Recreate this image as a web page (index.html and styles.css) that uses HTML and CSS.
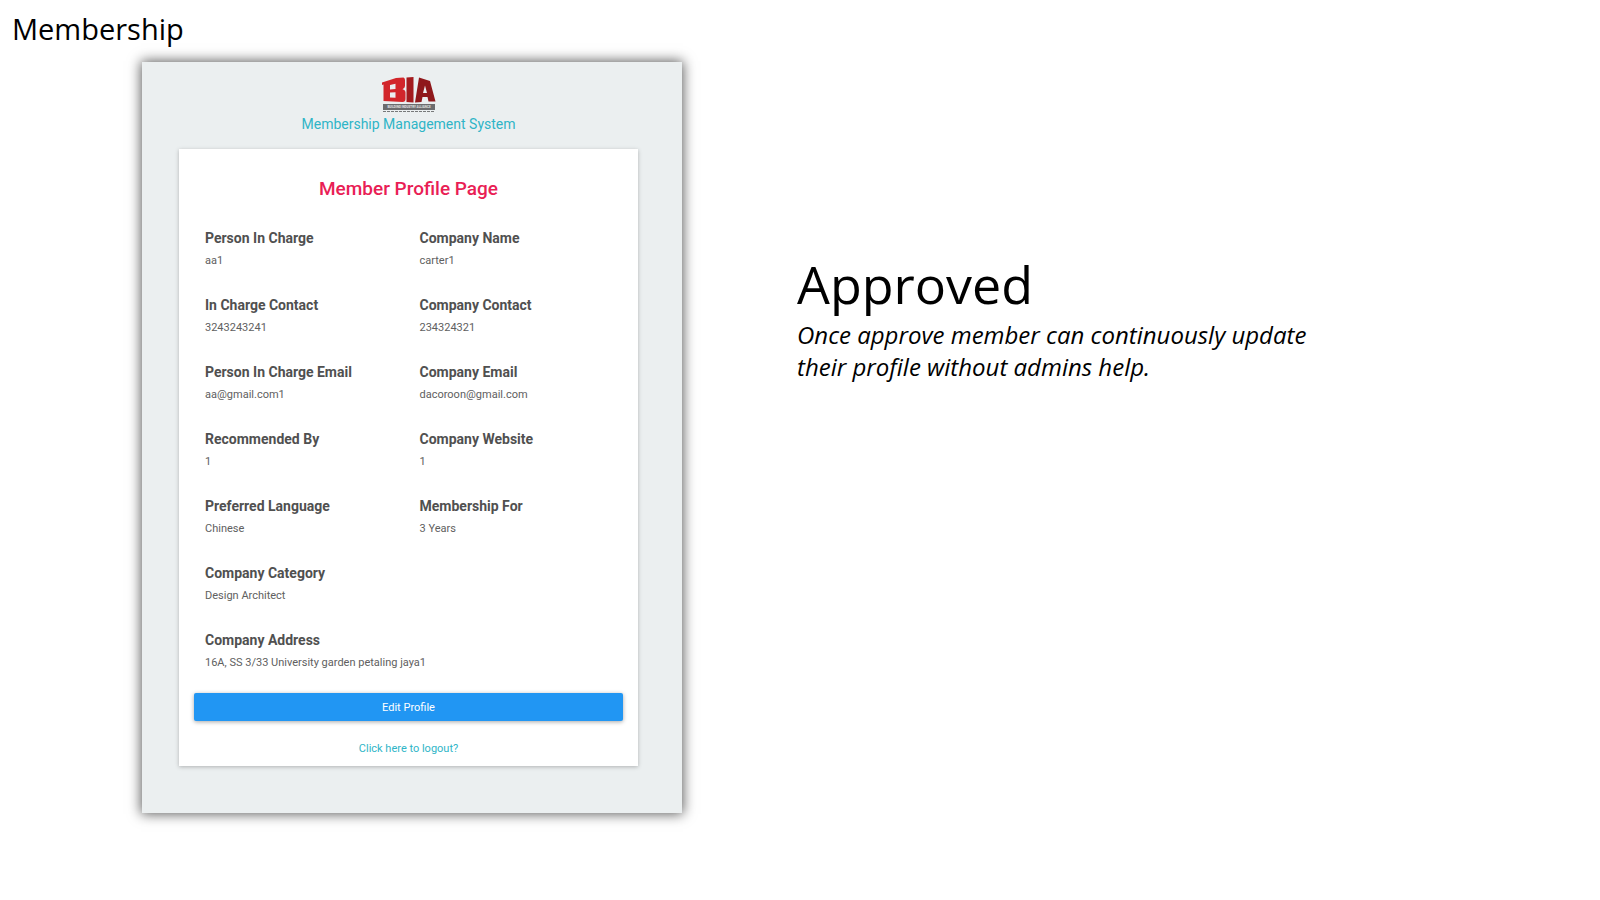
FILE: index.html
```html
<!DOCTYPE html>
<html lang="en">

<head>
    <meta charset="UTF-8">
    <meta name="viewport" content="width=device-width, initial-scale=1.0">
    <title>Membership</title>
    <link rel="stylesheet" href="styles.css">
</head>

<body>
    <h1 class="page-title">Membership</h1>
    <main class="slide">
        <section class="panel">
            <svg class="logo" viewBox="0 0 54 36" role="img" aria-label="BIA">
                <!-- B -->
                <path fill="#d2262b" fill-rule="evenodd" d="M0 6.5L14 2l7.500-.5Q23 2 23 4v6q0 2-2.500 3.200Q23.500 14 23.500 16.500V23q0 3-3 3L1.500 25V8.500L0 9zM8 9v4.500l5.500-.6V7.800zM8 16.500v5l5.500.3v-5.600z" />
                <!-- I -->
                <path fill="#a31b1e" d="M24.500 1.500L31.500 1v25.500l-7-.4z" />
                <!-- A -->
                <path fill="#8f181b" fill-rule="evenodd" d="M37 1.500L48 5l5.500 20.500h-7L45.500 21h-5l-1 5-6.500.5zM43 9.500L41 17h4z" />
                <!-- name strip -->
                <rect fill="#6c6c6e" x="1" y="28" width="52" height="6" />
                <text class="logo-name" x="27" y="32">BUILDING INDUSTRY ALLIANCE</text>
                <path stroke="#77797a" stroke-dasharray="3 1" d="M1 35.500h52" />
            </svg>
            <p class="system">Membership Management System</p>

            <div class="card">
                <h2>Member Profile Page</h2>
                <dl class="fields">
                    <div>
                        <dt>Person In Charge</dt>
                        <dd>aa1</dd>
                    </div>
                    <div>
                        <dt>Company Name</dt>
                        <dd>carter1</dd>
                    </div>
                    <div>
                        <dt>In Charge Contact</dt>
                        <dd>3243243241</dd>
                    </div>
                    <div>
                        <dt>Company Contact</dt>
                        <dd>234324321</dd>
                    </div>
                    <div>
                        <dt>Person In Charge Email</dt>
                        <dd>aa@gmail.com1</dd>
                    </div>
                    <div>
                        <dt>Company Email</dt>
                        <dd>dacoroon@gmail.com</dd>
                    </div>
                    <div>
                        <dt>Recommended By</dt>
                        <dd>1</dd>
                    </div>
                    <div>
                        <dt>Company Website</dt>
                        <dd>1</dd>
                    </div>
                    <div>
                        <dt>Preferred Language</dt>
                        <dd>Chinese</dd>
                    </div>
                    <div>
                        <dt>Membership For</dt>
                        <dd>3 Years</dd>
                    </div>
                    <div class="wide">
                        <dt>Company Category</dt>
                        <dd>Design Architect</dd>
                    </div>
                    <div class="wide">
                        <dt>Company Address</dt>
                        <dd>16A, SS 3/33 University garden petaling jaya1</dd>
                    </div>
                </dl>
                <button class="edit" type="button">Edit Profile</button>
                <a class="logout" href="#">Click here to logout?</a>
            </div>
        </section>

        <section class="note">
            <h2>Approved</h2>
            <p>Once approve member can continuously update their profile without admins help.</p>
        </section>
    </main>
</body>

</html>
```

FILE: styles.css
```css
* {
    margin: 0;
    padding: 0;
    box-sizing: border-box;
}

body {
    background-color: #fff;
    color: #000;
    font-family: "Open Sans", "Noto Sans", sans-serif;
}

.page-title {
    padding: 9px 12px 0;
    font-size: 29px;
    line-height: 40px;
    font-weight: 400;
}

.slide {
    display: grid;
    grid-template-columns: 270fr 339fr;
    column-gap: 115px;
    align-items: start;
    padding: 13px 125px 40px 142px;
}

/* left side: the profile page */
.panel {
    padding: 14px 44px 47px 37px;
    background-color: #ebeff0;
    box-shadow: 0 0 12px 1px rgba(0, 0, 0, .65);
    font-family: Roboto, sans-serif;
    text-align: center;
}

.logo {
    display: block;
    width: 54px;
    height: 36px;
    margin: 0 auto;
}

.logo-name {
    font-size: 3px;
    font-weight: 700;
    text-anchor: middle;
    fill: #e4e6e6;
}

.system {
    margin-top: 2px;
    font-size: 14px;
    line-height: 20px;
    color: #2fb5c7;
}

.card {
    margin-top: 15px;
    padding: 28px 15px 7px;
    background-color: #fff;
    box-shadow: 0 1px 4px rgba(0, 0, 0, .25);
}

.card h2 {
    font-size: 19px;
    line-height: 24px;
    font-weight: 500;
    color: #e91e55;
}

.fields {
    display: grid;
    grid-template-columns: 1fr 1fr;
    row-gap: 21px;
    margin-top: 26px;
    text-align: left;
}

.fields div {
    padding-left: 11px;
}

.fields .wide {
    grid-column: 1 / 3;
}

.fields dt {
    font-size: 14px;
    line-height: 22px;
    font-weight: 700;
    color: #505050;
}

.fields dd {
    font-size: 11px;
    line-height: 24px;
    color: #606060;
}

.edit {
    display: block;
    width: 100%;
    height: 28px;
    margin-top: 18px;
    border: 0;
    border-radius: 2px;
    background-color: #2196f3;
    box-shadow: 0 1px 4px rgba(0, 0, 0, .35);
    color: #fff;
    font-family: inherit;
    font-size: 11px;
    cursor: pointer;
}

.logout {
    display: block;
    margin-top: 18px;
    font-size: 11px;
    line-height: 20px;
    color: #2fb5c7;
    text-decoration: none;
}

/* right side: the caption */
.note {
    padding-top: 187px;
}

.note h2 {
    font-size: 52px;
    line-height: 70px;
    font-weight: 400;
}

.note p {
    max-width: 540px;
    font-size: 24px;
    line-height: 32px;
    font-style: italic;
}
```
